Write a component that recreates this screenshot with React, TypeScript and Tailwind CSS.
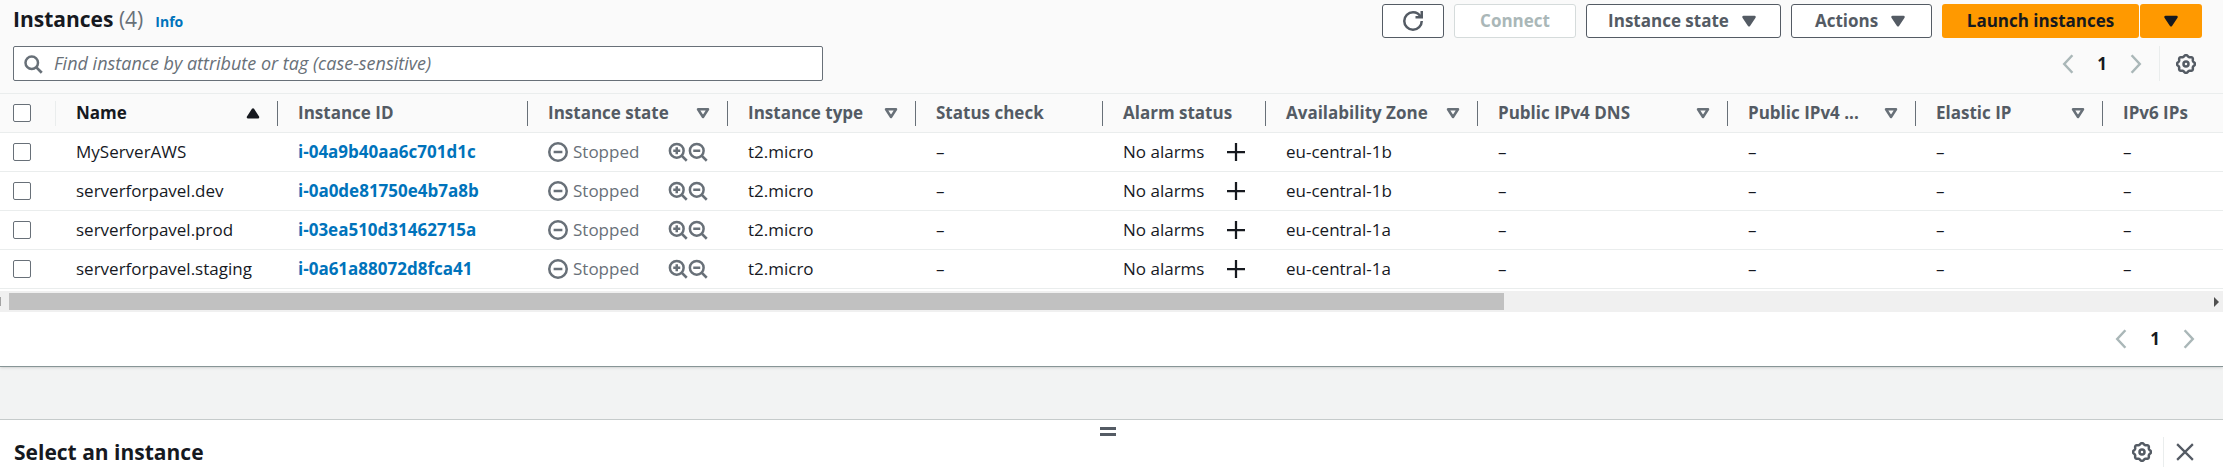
import type { ReactNode } from "react";

type Column = {
  label: string;
  width: string;
  sort?: "asc" | "none";
};

type Instance = {
  name: string;
  id: string;
  type: string;
  zone: string;
};

const columns: Column[] = [
  { label: "Name", width: "w-[222px]", sort: "asc" },
  { label: "Instance ID", width: "w-[250px]" },
  { label: "Instance state", width: "w-[200px]", sort: "none" },
  { label: "Instance type", width: "w-[188px]", sort: "none" },
  { label: "Status check", width: "w-[187px]" },
  { label: "Alarm status", width: "w-[163px]" },
  { label: "Availability Zone", width: "w-[212px]", sort: "none" },
  { label: "Public IPv4 DNS", width: "w-[250px]", sort: "none" },
  { label: "Public IPv4 ...", width: "w-[188px]", sort: "none" },
  { label: "Elastic IP", width: "w-[187px]", sort: "none" },
  { label: "IPv6 IPs", width: "" },
];

const instances: Instance[] = [
  { name: "MyServerAWS", id: "i-04a9b40aa6c701d1c", type: "t2.micro", zone: "eu-central-1b" },
  { name: "serverforpavel.dev", id: "i-0a0de81750e4b7a8b", type: "t2.micro", zone: "eu-central-1b" },
  { name: "serverforpavel.prod", id: "i-03ea510d31462715a", type: "t2.micro", zone: "eu-central-1a" },
  { name: "serverforpavel.staging", id: "i-0a61a88072d8fca41", type: "t2.micro", zone: "eu-central-1a" },
];

// Wavy outline of the settings gear: a circle with eight soft teeth.
const gearOutline =
  Array.from({ length: 96 }, (_, i) => {
    const a = (i / 96) * Math.PI * 2;
    const r = 6.6 + 0.6 * Math.cos(8 * a);
    return `${i === 0 ? "M" : "L"}${(8 + r * Math.sin(a)).toFixed(2)} ${(8 - r * Math.cos(a)).toFixed(2)}`;
  }).join("") + "Z";

function Icon({ className = "size-5", children }: { className?: string; children: ReactNode }) {
  return (
    <svg
      viewBox="0 0 16 16"
      className={`block shrink-0 ${className}`}
      fill="none"
      stroke="currentColor"
      strokeWidth="2"
      aria-hidden="true"
    >
      {children}
    </svg>
  );
}

const Gear = () => (
  <Icon>
    <path d={gearOutline} />
    <circle cx="8" cy="8" r="2" />
  </Icon>
);

const CaretFilled = () => (
  <Icon>
    <path d="M3.600 4.800h8.800L8 11.400z" fill="currentColor" strokeLinejoin="round" />
  </Icon>
);

const SortIcon = ({ sort }: { sort: "asc" | "none" }) =>
  sort === "asc" ? (
    <Icon className="size-5 text-[#16191f]">
      <path d="M4 11.3h8L8 5.2z" fill="currentColor" strokeLinejoin="round" />
    </Icon>
  ) : (
    <Icon className="size-5 text-[#687078]">
      <path d="M4 5h8l-4 6.2z" strokeLinejoin="round" />
    </Icon>
  );

const StoppedIcon = () => (
  <Icon>
    <circle cx="8" cy="8" r="7" />
    <path d="M4.500 8h7" />
  </Icon>
);

const Magnifier = ({ plus }: { plus?: boolean }) => (
  <Icon>
    <circle cx="7" cy="7" r="5.5" />
    <path d="M11 11l4 4" />
    <path d={plus ? "M4.200 7h5.600M7 4.200v5.600" : "M4.200 7h5.600"} />
  </Icon>
);

function Pagination({ label }: { label: string }) {
  return (
    <nav aria-label={label} className="flex items-center gap-[19px] text-[#aab7b8]">
      <button type="button" aria-label="Previous page" disabled>
        <Icon>
          <path d="M11.500 1L5 8l6.500 7" />
        </Icon>
      </button>
      <button
        type="button"
        aria-current="page"
        className="w-[10px] text-center text-[17px] leading-5 font-bold text-[#16191f]"
      >
        1
      </button>
      <button type="button" aria-label="Next page" disabled>
        <Icon>
          <path d="M4.500 1L11 8l-6.500 7" />
        </Icon>
      </button>
    </nav>
  );
}

const buttonBase =
  "flex h-[34px] items-center justify-center rounded-[3px] pb-px text-[17px] leading-5 font-bold";
const buttonNormal = "border border-[#545b64] bg-white text-[#545b64]";
const buttonPrimary = "bg-[#ff9900] text-[#16191f]";
const checkbox =
  "block size-[18px] appearance-none rounded-[2px] border border-[#687078] bg-white checked:bg-[#0073bb]";

function Cell({ children, className = "" }: { children: ReactNode; className?: string }) {
  return <td className={`h-[39px] border-b border-[#eaeded] py-0 pr-4 pl-5 ${className}`}>{children}</td>;
}

export default function App() {
  return (
    <main className="flex min-h-screen flex-col bg-[#f2f3f3] font-['Open_Sans','Noto_Sans',sans-serif] text-[17px] leading-5 text-[#16191f]">
      <section aria-labelledby="instances-title" className="border-b border-[#879596] bg-white shadow-sm">
        <header className="flex flex-col gap-2 border-b border-[#eaeded] bg-[#fafafa] pt-1 pr-[21px] pb-3 pl-[13px]">
          <div className="flex h-[34px] items-center justify-between">
            <div className="flex items-baseline gap-3 pb-1">
              <h1 id="instances-title" className="text-[21px] leading-7 font-bold">
                Instances <span className="font-normal text-[#687078]">(4)</span>
              </h1>
              <a href="#info" className="text-sm font-bold text-[#0073bb]">
                Info
              </a>
            </div>
            <div className="flex gap-[10px]">
              <button type="button" aria-label="Refresh" className={`${buttonBase} ${buttonNormal} w-[62px]`}>
                <Icon>
                  <path d="M15 8c0 3.870-3.130 7-7 7s-7-3.130-7-7 3.130-7 7-7c2.790 0 5.200 1.630 6.330 4" />
                  <path d="M10 5h5V0" />
                </Icon>
              </button>
              <button
                type="button"
                disabled
                className={`${buttonBase} w-[122px] border border-[#d5dbdb] bg-white text-[#aab7b8]`}
              >
                Connect
              </button>
              <button type="button" className={`${buttonBase} ${buttonNormal} w-[195px] gap-[10px]`}>
                Instance state
                <CaretFilled />
              </button>
              <button type="button" className={`${buttonBase} ${buttonNormal} w-[141px] gap-[10px]`}>
                Actions
                <CaretFilled />
              </button>
              <div className="flex gap-px">
                <button type="button" className={`${buttonBase} ${buttonPrimary} w-[197px]`}>
                  Launch instances
                </button>
                <button
                  type="button"
                  aria-label="More launch options"
                  className={`${buttonBase} ${buttonPrimary} w-[62px]`}
                >
                  <CaretFilled />
                </button>
              </div>
            </div>
          </div>

          <div className="flex items-center justify-between">
            <label className="flex h-[35px] w-[810px] items-center gap-[11px] rounded-[2px] border border-[#687078] bg-white px-[9px] text-[#687078]">
              <Icon>
                <circle cx="7" cy="7" r="5" />
                <path d="M10.700 10.700L15 15" strokeWidth="2.200" />
              </Icon>
              <input
                type="text"
                aria-label="Find instance"
                placeholder="Find instance by attribute or tag (case-sensitive)"
                className="min-w-0 flex-1 bg-transparent pb-px text-lg leading-6 outline-none placeholder:text-[#687078] placeholder:italic"
              />
            </label>
            <div className="flex items-center">
              <Pagination label="Instances pages" />
              <span className="ml-[13px] h-[35px] border-l border-[#eaeded]" />
              <button type="button" aria-label="Preferences" className="mr-[6px] ml-4 text-[#545b64]">
                <Gear />
              </button>
            </div>
          </div>
        </header>

        <div className="overflow-hidden">
          <table className="w-full table-fixed border-separate border-spacing-0 text-left whitespace-nowrap">
            <thead className="bg-[#fafafa]">
              <tr>
                <th scope="col" className="h-[39px] w-14 border-b border-[#eaeded] p-0">
                  <div className="flex h-[25px] items-center border-r border-[#eaeded] pl-[13px]">
                    <input type="checkbox" aria-label="Select all instances" className={checkbox} />
                  </div>
                </th>
                {columns.map((column, i) => (
                  <th
                    key={column.label}
                    scope="col"
                    className={`border-b border-[#eaeded] p-0 font-bold ${column.width} ${
                      column.sort === "asc" ? "text-[#16191f]" : "text-[#545b64]"
                    }`}
                  >
                    <div
                      className={`flex h-[25px] items-center justify-between pr-[14px] pb-px pl-5 ${
                        i < columns.length - 1 ? "border-r border-[#687078]" : ""
                      }`}
                    >
                      {column.label}
                      {column.sort && (
                        <button type="button" aria-label={`Sort by ${column.label}`}>
                          <SortIcon sort={column.sort} />
                        </button>
                      )}
                    </div>
                  </th>
                ))}
              </tr>
            </thead>
            <tbody>
              {instances.map((instance) => (
                <tr key={instance.id}>
                  <td className="h-[39px] border-b border-[#eaeded] p-0 pl-[13px]">
                    <input type="checkbox" aria-label={`Select ${instance.name}`} className={checkbox} />
                  </td>
                  <Cell>{instance.name}</Cell>
                  <Cell>
                    <a href={`#${instance.id}`} className="font-bold text-[#0073bb]">
                      {instance.id}
                    </a>
                  </Cell>
                  <Cell className="text-[#687078]">
                    <div className="flex items-center justify-between">
                      <span className="flex items-center gap-[5px]">
                        <StoppedIcon />
                        Stopped
                      </span>
                      <span className="flex pr-1">
                        <button type="button" aria-label="Filter in stopped">
                          <Magnifier plus />
                        </button>
                        <button type="button" aria-label="Filter out stopped">
                          <Magnifier />
                        </button>
                      </span>
                    </div>
                  </Cell>
                  <Cell>{instance.type}</Cell>
                  <Cell>–</Cell>
                  <Cell>
                    <div className="flex items-center justify-between">
                      No alarms
                      <button type="button" aria-label="Create alarm" className="pr-[5px]">
                        <Icon className="size-[18px]">
                          <path d="M8 0v16M0 8h16" />
                        </Icon>
                      </button>
                    </div>
                  </Cell>
                  <Cell>{instance.zone}</Cell>
                  <Cell>–</Cell>
                  <Cell>–</Cell>
                  <Cell>–</Cell>
                  <Cell>–</Cell>
                </tr>
              ))}
            </tbody>
          </table>
        </div>

        <div className="mt-[2px] flex h-[21px] items-center bg-[#f0f0f0]">
          <span className="h-[9px] w-px bg-[#a3a3a3]" />
          <span className="ml-2 h-[17px] w-[1495px] bg-[#c1c1c1]" />
          <svg viewBox="0 0 5 10" className="mr-1 ml-auto h-[10px] w-[5px]" fill="#505050" aria-hidden="true">
            <path d="M0 0l5 5-5 5z" />
          </svg>
        </div>

        <footer className="flex justify-end py-[17px] pr-6">
          <Pagination label="Instances pages, bottom" />
        </footer>
      </section>

      <section aria-labelledby="detail-title" className="mt-[52px] flex-1 border-t border-[#c6cbcb] bg-white">
        <div className="flex justify-center pt-[7px] pr-[7px]">
          <button type="button" aria-label="Resize panel" className="h-[9px] w-4 border-y-[3px] border-[#545b64]" />
        </div>
        <div className="flex items-center justify-between pr-[29px] pl-[14px]">
          <h2 id="detail-title" className="text-[21px] leading-8 font-bold">
            Select an instance
          </h2>
          <div className="flex items-center text-[#545b64]">
            <button type="button" aria-label="Panel preferences">
              <Gear />
            </button>
            <span className="ml-[11px] h-[30px] border-l border-[#eaeded]" />
            <button type="button" aria-label="Close panel" className="ml-3">
              <Icon className="size-[18px]">
                <path d="M1 1l14 14M15 1L1 15" />
              </Icon>
            </button>
          </div>
        </div>
      </section>
    </main>
  );
}
